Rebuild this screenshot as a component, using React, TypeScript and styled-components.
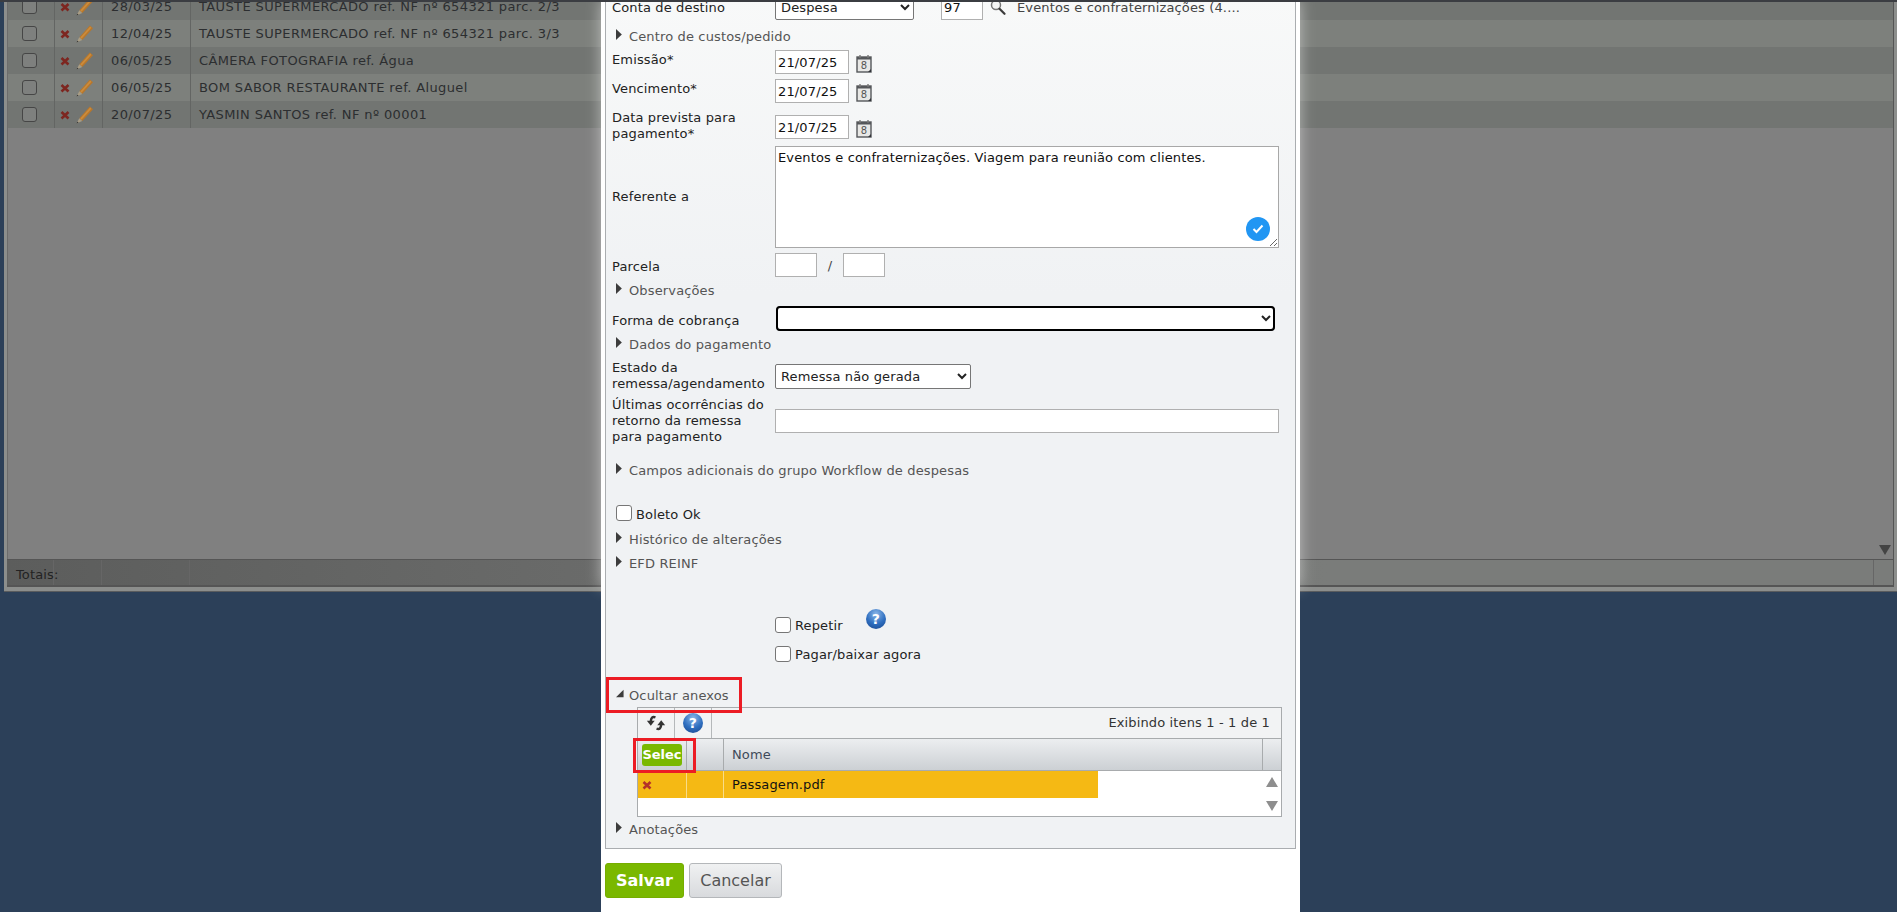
import React from 'react';
import styled, { createGlobalStyle } from 'styled-components';

const GlobalStyle = createGlobalStyle`
  html, body {
    margin: 0;
    padding: 0;
    background: #2c4059;
    overflow: hidden;
  }
  * { box-sizing: border-box; }
`;

const FONT = `"DejaVu Sans", Verdana, sans-serif`;
const TEXT = `font-size: 13px; letter-spacing: 0.14px;`;

const Page = styled.div`
  position: relative;
  width: 1897px;
  height: 912px;
  overflow: hidden;
  background: #2c4059;
  font-family: ${FONT};
  ${TEXT}
`;

// janela de fundo, escurecida pelo modal
const BackWindow = styled.div`
  position: relative;
  height: 592px;
  margin-left: 4px;
  padding: 0 3px 4px 3px;
  background: #8c8e8c;
  border-bottom: 1px solid #5a5c5e;
  display: flex;
  flex-direction: column;
  overflow: hidden;
`;

const BackGrid = styled.div`
  flex: 1;
  background: #808080;
  overflow: hidden;
  border-left: 1px solid #6c6c6c;
  border-right: 1px solid #555;
  position: relative;
`;

const BackRows = styled.div`
  margin-top: -7px;
`;

const BackRow = styled.div<{ $odd: boolean }>`
  display: grid;
  grid-template-columns: 47px 48px 88px 1fr;
  height: 27px;
  align-items: center;
  background: ${(p) => (p.$odd ? '#727572' : '#7d807c')};
  color: #2c2e30;
  letter-spacing: 0.38px;
`;

const BackCell = styled.div<{ $pad?: number; $last?: boolean }>`
  height: 100%;
  display: flex;
  align-items: center;
  border-right: ${(p) => (p.$last ? 'none' : '1px solid #636563')};
  padding-left: ${(p) => p.$pad ?? 8}px;
  white-space: nowrap;
  gap: 5px;
`;

const BackCheck = styled.span`
  width: 15px;
  height: 15px;
  margin-left: 6px;
  border: 1.5px solid #464646;
  border-radius: 3px;
  background: #7e807e;
`;

const BackScrollArrow = styled.div`
  position: absolute;
  right: 2px;
  bottom: 4px;
  width: 0;
  height: 0;
  border-left: 6px solid transparent;
  border-right: 6px solid transparent;
  border-top: 10px solid #444;
`;

const Totals = styled.div`
  height: 28px;
  flex: none;
  display: grid;
  grid-template-columns: 47px 48px 88px 1fr 19px;
  background: linear-gradient(90deg, #5c5d5c 0%, #6a6b6a 32%, #7a7c7a 70%);
  border-top: 1px solid #555;
  border-bottom: 2px solid #555;
  border-right: 1px solid #555;
  color: #232323;
`;

const TotalCell = styled.div<{ $last?: boolean }>`
  display: flex;
  align-items: center;
  padding: 4px 0 0 9px;
  border-right: ${(p) => (p.$last ? 'none' : '1px solid #666')};
  white-space: nowrap;
`;

const Modal = styled.div`
  position: absolute;
  left: 601px;
  top: 0;
  width: 699px;
  height: 912px;
  background: #fff;
  overflow: hidden;
  padding: 0 4px;
`;

const Glow = styled.div`
  position: absolute;
  left: 601px;
  top: 0;
  width: 699px;
  height: 587px;
  box-shadow: 0 0 14px rgba(255, 255, 255, 0.5);
`;

const TopStrip = styled.div`
  position: absolute;
  left: 0;
  top: 0;
  right: 0;
  height: 2px;
  background: #3b3d42;
`;

const Panel = styled.div`
  margin-top: -6px;
  border: 1px solid #aaadb0;
  background: linear-gradient(180deg, #f8f9f9 0%, #f0f2f4 35%, #f0f2f4 100%);
  padding: 0 0 8px 6px;
  color: #222;
`;

const Row = styled.div<{ $top: number; $h: number }>`
  display: grid;
  grid-template-columns: 163px 1fr;
  margin-top: ${(p) => p.$top}px;
  height: ${(p) => p.$h}px;
  align-items: center;
`;

const Label = styled.div<{ $shift?: number }>`
  line-height: 16px;
  white-space: nowrap;
  transform: translateY(${(p) => p.$shift ?? 0}px);
`;

const Controls = styled.div`
  position: relative;
  display: flex;
  align-items: center;
  height: 100%;
`;

const Toggle = styled.div<{ $top: number }>`
  position: relative;
  display: flex;
  align-items: center;
  height: 22px;
  margin-top: ${(p) => p.$top}px;
  padding-left: 4px;
  color: #555;
`;

const Arrow = styled.span<{ $open?: boolean }>`
  display: inline-block;
  flex: none;
  width: 13px;
  height: 11px;
  margin-top: -3px;
  background: #3c3c3c;
  clip-path: ${(p) =>
    p.$open
      ? 'polygon(0 85%, 58% 85%, 58% 15%)'
      : 'polygon(0 0, 45% 50%, 0 100%)'};
`;

const Field = styled.input<{ $w: number; $left?: number; $h?: number }>`
  width: ${(p) => p.$w}px;
  height: ${(p) => p.$h ?? 24}px;
  margin-left: ${(p) => p.$left ?? 0}px;
  border: 1px solid #b0b0b0;
  background: #fff;
  font: 13px ${FONT};
  letter-spacing: 0.14px;
  color: #111;
  padding: 0 2px;
  outline: none;
`;

const Combo = styled.select<{ $w: number; $focus?: boolean }>`
  width: ${(p) => p.$w}px;
  height: 25px;
  font: 13px ${FONT};
  letter-spacing: 0.14px;
  color: #222;
  background: #fff;
  border: 1px solid #767676;
  border-radius: ${(p) => (p.$focus ? 4 : 2)}px;
  padding-left: 1px;
  margin-left: ${(p) => (p.$focus ? 1 : 0)}px;
  outline: ${(p) => (p.$focus ? '2px solid #000' : 'none')};
  outline-offset: -2px;
`;

const Account = styled.span`
  margin-left: 11px;
  color: #444;
  white-space: nowrap;
`;

const Notes = styled.textarea`
  width: 504px;
  height: 102px;
  border: 1px solid #a8a8a8;
  background: #fff;
  font: 13px ${FONT};
  letter-spacing: 0.14px;
  line-height: 16px;
  color: #111;
  padding: 3px 2px;
  outline: none;
  resize: both;
  display: block;
`;

const CheckBadge = styled.span`
  position: absolute;
  left: 471px;
  bottom: 7px;
  width: 24px;
  height: 24px;
  border-radius: 50%;
  background: #2196f3;
  display: flex;
  align-items: center;
  justify-content: center;
`;

const Slash = styled.span`
  width: 26px;
  text-align: center;
  color: #444;
`;

const CheckLine = styled.label<{ $indent?: number; $top?: number }>`
  display: flex;
  align-items: center;
  gap: 4px;
  height: 17px;
  margin-top: ${(p) => p.$top ?? 0}px;
  padding-left: ${(p) => p.$indent ?? 0}px;
`;

const CheckText = styled.span`
  padding-top: 2px;
`;

const Check = styled.input`
  appearance: none;
  flex: none;
  margin: 0 0 1px;
  width: 16px;
  height: 16px;
  border: 1px solid #767676;
  border-radius: 3px;
  background: #fff;
`;

const Spaced = styled.div<{ $top: number; $left: number }>`
  display: flex;
  align-items: flex-end;
  margin-top: ${(p) => p.$top}px;
  padding-left: ${(p) => p.$left}px;
  gap: 23px;
`;

const HelpWrap = styled.span`
  display: inline-flex;
  margin-bottom: 5px;
`;

const Attachments = styled.div`
  margin: 1px 13px 0 25px;
  height: 110px;
  border: 1px solid #a8abad;
  background: #fff;
  display: flex;
  flex-direction: column;
`;

const GridBar = styled.div`
  height: 31px;
  display: flex;
  background: #f2f3f4;
  border-bottom: 1px solid #a8abad;
`;

const BarCell = styled.div`
  width: 37px;
  display: flex;
  align-items: center;
  justify-content: center;
  border-right: 1px solid #b5b8ba;
`;

const BarInfo = styled.div`
  flex: 1;
  text-align: right;
  line-height: 30px;
  padding-right: 11px;
  color: #333;
`;

const GridHead = styled.div`
  position: relative;
  height: 32px;
  display: grid;
  grid-template-columns: 49px 37px 1fr 18px;
  background: linear-gradient(180deg, #eceef0 0%, #ccd0d4 100%);
  border-bottom: 1px solid #a8abad;
`;

const HeadCell = styled.div<{ $last?: boolean }>`
  display: flex;
  align-items: center;
  padding-left: 8px;
  border-right: ${(p) => (p.$last ? 'none' : '1px solid #a8abad')};
  color: #3f4a5a;
`;

const SelectButton = styled.button`
  width: 40px;
  height: 22px;
  padding: 0;
  margin-left: -4px;
  white-space: nowrap;
  border: none;
  border-radius: 3px;
  background: #7ab800;
  color: #fff;
  font: bold 13px ${FONT};
  text-align: center;
`;

const GridBody = styled.div`
  position: relative;
  flex: 1;
`;

const FileRow = styled.div`
  width: 460px;
  height: 27px;
  display: grid;
  grid-template-columns: 49px 37px 1fr;
  background: #f5b914;
  color: #111;
`;

const FileCell = styled.div<{ $pad?: number }>`
  display: flex;
  align-items: center;
  padding-left: ${(p) => p.$pad ?? 8}px;
  border-right: 1px solid #f8dc8a;
  &:last-child { border-right: none; }
`;

const ScrollUp = styled.span`
  position: absolute;
  right: 3px;
  top: 6px;
  width: 0;
  height: 0;
  border-left: 6.5px solid transparent;
  border-right: 6.5px solid transparent;
  border-bottom: 10px solid #8e8e8e;
`;

const ScrollDown = styled(ScrollUp)`
  top: 30px;
  border-bottom: none;
  border-top: 10px solid #8e8e8e;
`;

const Highlight = styled.div<{ $l: number; $t: number; $w: number; $h: number }>`
  position: absolute;
  left: ${(p) => p.$l}px;
  top: ${(p) => p.$t}px;
  width: ${(p) => p.$w}px;
  height: ${(p) => p.$h}px;
  border: 3px solid #ec1c24;
  pointer-events: none;
  z-index: 2;
`;

const Actions = styled.div`
  display: flex;
  gap: 5px;
  margin-top: 14px;
`;

const SaveButton = styled.button`
  width: 79px;
  height: 35px;
  border: 1px solid #76ad00;
  border-radius: 3px;
  background: #7ab800;
  color: #fff;
  font: bold 16px ${FONT};
`;

const CancelButton = styled.button`
  width: 93px;
  height: 35px;
  border: 1px solid #b4b7ba;
  border-radius: 3px;
  background: linear-gradient(180deg, #f0f1f2, #d8dadd);
  color: #555;
  font: 16px ${FONT};
`;

const CalendarSvg = styled.svg`
  flex: none;
  margin: 3px 0 0 7px;
`;

const SearchSvg = styled.svg`
  flex: none;
  margin-left: 7px;
`;

const RemoveIcon = ({ c = '#b3312a' }: { c?: string }) => (
  <svg width="10" height="10" viewBox="0 0 10 10">
    <path d="M1.5 2 L8.5 8.5 M8.5 2 L1.5 8.5" stroke={c} strokeWidth="2.6" />
  </svg>
);

const PencilIcon = () => (
  <svg width="19" height="20" viewBox="0 0 19 20">
    <path d="M4.3 13.2 L14.8 1.5 L18 4.3 L7.3 16 Z" fill="#b8772b" />
    <path d="M5.3 13.6 L15.2 2.6 L16.4 3.7 L6.5 14.8 Z" fill="#cb8c3d" />
    <path d="M1.5 18.5 L4.3 13.2 L7.3 16 Z" fill="#a89c84" />
    <path d="M1.5 18.5 L2.4 16.7 L3.6 17.6 Z" fill="#333" />
  </svg>
);

const CalendarIcon = () => (
  <CalendarSvg width="17" height="19" viewBox="0 0 17 19">
    <rect x="1" y="3" width="14" height="15" fill="#e8e8e6" stroke="#55575a" strokeWidth="1.4" />
    <rect x="1" y="3" width="14" height="2.5" fill="#55575a" />
    <path d="M4 1v3M12 1v3" stroke="#777" strokeWidth="1.4" />
    <path d="M15 15l-3 3h3z" fill="#33353a" />
    <text x="8" y="15" fontSize="10" textAnchor="middle" fontFamily="DejaVu Sans" fill="#555">8</text>
  </CalendarSvg>
);

const SearchIcon = () => (
  <SearchSvg width="16" height="17" viewBox="0 0 16 17">
    <circle cx="6" cy="6" r="4.5" fill="#f4f5f5" stroke="#777" strokeWidth="1.5" />
    <path d="M9.5 9.8 L14.5 14.8" stroke="#3c3c3c" strokeWidth="2.2" strokeLinecap="round" />
  </SearchSvg>
);

const HelpIcon = ({ id, size = 20 }: { id: string; size?: number }) => (
  <svg width={size} height={size} viewBox="0 0 20 20">
    <defs>
      <radialGradient id={id} cx="50%" cy="25%" r="80%">
        <stop offset="0%" stopColor="#8ab6e8" />
        <stop offset="60%" stopColor="#2f6fc0" />
        <stop offset="100%" stopColor="#1d4f98" />
      </radialGradient>
    </defs>
    <circle cx="10" cy="10" r="10" fill={`url(#${id})`} />
    <text x="10" y="15" fontSize="14" fontWeight="bold" textAnchor="middle" fontFamily="DejaVu Sans" fill="#fff">?</text>
  </svg>
);

// duas setas curvas, uma para cima e outra para baixo
const RefreshIcon = () => (
  <svg width="20" height="18" viewBox="0 0 18 16">
    <path d="M8.5 3 Q4.5 1.5 4.3 7" fill="none" stroke="#333" strokeWidth="2.2" />
    <path d="M0.8 6 H7.8 L4.3 10.5 Z" fill="#333" />
    <path d="M9.5 13 Q13.5 14.5 13.7 9" fill="none" stroke="#333" strokeWidth="2.2" />
    <path d="M10.2 10 H17.2 L13.7 5.5 Z" fill="#333" />
  </svg>
);

const backRows = [
  { date: '28/03/25', text: 'TAUSTE SUPERMERCADO ref. NF nº 654321 parc. 2/3' },
  { date: '12/04/25', text: 'TAUSTE SUPERMERCADO ref. NF nº 654321 parc. 3/3' },
  { date: '06/05/25', text: 'CÂMERA FOTOGRAFIA ref. Água' },
  { date: '06/05/25', text: 'BOM SABOR RESTAURANTE ref. Aluguel' },
  { date: '20/07/25', text: 'YASMIN SANTOS ref. NF nº 00001' },
];

const App = () => {
  return (
    <Page>
      <GlobalStyle />
      <BackWindow>
        <BackGrid>
          <BackRows>
            {backRows.map((r, i) => (
              <BackRow key={i} $odd={i % 2 === 0}>
                <BackCell>
                  <BackCheck />
                </BackCell>
                <BackCell $pad={5}>
                  <RemoveIcon c="#7d2620" />
                  <PencilIcon />
                </BackCell>
                <BackCell>{r.date}</BackCell>
                <BackCell $last>{r.text}</BackCell>
              </BackRow>
            ))}
          </BackRows>
          <BackScrollArrow />
        </BackGrid>
        <Totals>
          <TotalCell>Totais:</TotalCell>
          <TotalCell />
          <TotalCell />
          <TotalCell />
          <TotalCell $last />
        </Totals>
      </BackWindow>

      <Glow />
      <Modal>
        <Panel>
          <Row $top={0} $h={25}>
            <Label>Conta de destino</Label>
            <Controls>
              <Combo $w={139} defaultValue="Despesa">
                <option>Despesa</option>
              </Combo>
              <Field $w={42} $left={27} $h={25} defaultValue="97" readOnly />
              <SearchIcon />
              <Account>Eventos e confraternizações (4....</Account>
            </Controls>
          </Row>
          <Toggle $top={5}>
            <Arrow />
            Centro de custos/pedido
          </Toggle>
          <Row $top={3} $h={24}>
            <Label $shift={-2}>Emissão*</Label>
            <Controls>
              <Field $w={74} defaultValue="21/07/25" readOnly />
              <CalendarIcon />
            </Controls>
          </Row>
          <Row $top={5} $h={24}>
            <Label $shift={-2}>Vencimento*</Label>
            <Controls>
              <Field $w={74} defaultValue="21/07/25" readOnly />
              <CalendarIcon />
            </Controls>
          </Row>
          <Row $top={8} $h={24}>
            <Label $shift={-1}>
              Data prevista para
              <br />
              pagamento*
            </Label>
            <Controls>
              <Field $w={74} defaultValue="21/07/25" readOnly />
              <CalendarIcon />
            </Controls>
          </Row>
          <Row $top={11} $h={102}>
            <Label>Referente a</Label>
            <Controls>
              <Notes defaultValue="Eventos e confraternizações. Viagem para reunião com clientes." readOnly />
              <CheckBadge>
                <svg width="12" height="10" viewBox="0 0 12 10">
                  <path d="M1.5 5 L4.5 8 L10.5 1.5" fill="none" stroke="#fff" strokeWidth="2" />
                </svg>
              </CheckBadge>
            </Controls>
          </Row>
          <Row $top={5} $h={24}>
            <Label $shift={2}>Parcela</Label>
            <Controls>
              <Field $w={42} readOnly />
              <Slash>/</Slash>
              <Field $w={42} readOnly />
            </Controls>
          </Row>
          <Toggle $top={2}>
            <Arrow />
            Observações
          </Toggle>
          <Row $top={5} $h={25}>
            <Label $shift={2}>Forma de cobrança</Label>
            <Controls>
              <Combo $w={499} $focus />
            </Controls>
          </Row>
          <Toggle $top={2}>
            <Arrow />
            Dados do pagamento
          </Toggle>
          <Row $top={5} $h={25}>
            <Label $shift={0}>
              Estado da
              <br />
              remessa/agendamento
            </Label>
            <Controls>
              <Combo $w={196} defaultValue="Remessa não gerada">
                <option>Remessa não gerada</option>
              </Combo>
            </Controls>
          </Row>
          <Row $top={12} $h={47}>
            <Label>
              Últimas ocorrências do
              <br />
              retorno da remessa
              <br />
              para pagamento
            </Label>
            <Controls>
              <Field $w={504} readOnly />
            </Controls>
          </Row>
          <Toggle $top={15}>
            <Arrow />
            Campos adicionais do grupo Workflow de despesas
          </Toggle>
          <CheckLine $indent={4} $top={24}>
            <Check type="checkbox" />
            <CheckText>Boleto Ok</CheckText>
          </CheckLine>
          <Toggle $top={6}>
            <Arrow />
            Histórico de alterações
          </Toggle>
          <Toggle $top={2}>
            <Arrow />
            EFD REINF
          </Toggle>
          <Spaced $top={35} $left={163}>
            <CheckLine>
              <Check type="checkbox" />
              Repetir
            </CheckLine>
            <HelpWrap>
              <HelpIcon id="help-a" />
            </HelpWrap>
          </Spaced>
          <Spaced $top={12} $left={163}>
            <CheckLine>
              <Check type="checkbox" />
              Pagar/baixar agora
            </CheckLine>
          </Spaced>
          <Toggle $top={21}>
            <Highlight $l={-6} $t={-7} $w={136} $h={36} />
            <Arrow $open />
            Ocultar anexos
          </Toggle>
          <Attachments>
            <GridBar>
              <BarCell>
                <RefreshIcon />
              </BarCell>
              <BarCell>
                <HelpIcon id="help-b" />
              </BarCell>
              <BarInfo>Exibindo itens 1 - 1 de 1</BarInfo>
            </GridBar>
            <GridHead>
              <Highlight $l={-5} $t={-1} $w={63} $h={35} />
              <HeadCell>
                <SelectButton>Selec</SelectButton>
              </HeadCell>
              <HeadCell />
              <HeadCell>Nome</HeadCell>
              <HeadCell $last />
            </GridHead>
            <GridBody>
              <FileRow>
                <FileCell $pad={4}>
                  <RemoveIcon />
                </FileCell>
                <FileCell />
                <FileCell>Passagem.pdf</FileCell>
              </FileRow>
              <ScrollUp />
              <ScrollDown />
            </GridBody>
          </Attachments>
          <Toggle $top={1}>
            <Arrow />
            Anotações
          </Toggle>
        </Panel>
        <Actions>
          <SaveButton>Salvar</SaveButton>
          <CancelButton>Cancelar</CancelButton>
        </Actions>
      </Modal>
      <TopStrip />
    </Page>
  );
};

export default App;
